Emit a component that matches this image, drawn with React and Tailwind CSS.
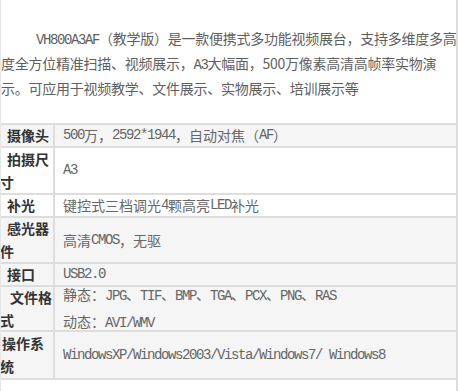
import React from "react";

const M = ({ children }) => (
  <span className="font-['Liberation_Mono',monospace] text-[14px] tracking-[-1.4px]">{children}</span>
);

const rows = [
  { label: "摄像头", ind: "indent-[7px]", h: "h-[23px]", bg: "bg-[#f5f5f5]", value: <>
    <M>500</M>万，<M>2592*1944</M>，自动对焦（<M>AF</M>）</> },
  { label: "拍摄尺寸", ind: "indent-[7px]", h: "h-[47px]", bg: "bg-white", value: <M>A3</M> },
  { label: "补光", ind: "indent-[7px]", h: "h-[23px]", bg: "bg-white", value: <>键控式三档调光<M>4</M>颗高亮<M>LED</M>补光</> },
  { label: "感光器件", ind: "indent-[7px]", h: "h-[46px]", bg: "bg-[#f5f5f5]", value: <>高清<M>CMOS</M>，无驱</> },
  { label: "接口", ind: "indent-[7px]", h: "h-[23px]", bg: "bg-[#f5f5f5]", value: <M>USB2.0</M> },
  { label: "文件格式", ind: "indent-[10px]", h: "h-[45px]", bg: "bg-[#f5f5f5]", value: <div className="leading-[25px]">
    <div>静态：<M>JPG</M>、<M>TIF</M>、<M>BMP</M>、<M>TGA</M>、<M>PCX</M>、<M>PNG</M>、<M>RAS</M></div>
    <div>动态：<M>AVI/WMV</M></div>
  </div> },
  { label: "操作系统", ind: "indent-[2px]", h: "h-[48px]", bg: "bg-[#f5f5f5]", value: <M>WindowsXP/Windows2003/Vista/Windows7/ Windows8</M> },
];

export default function App() {
  return (
    <div className="w-[458px] h-[391px] overflow-hidden bg-white border-l border-l-[#e6e6e6] border-r-2 border-r-[#dddddd] font-['Noto_Sans_CJK_SC',sans-serif]">
      <div className="pt-[27px] text-[14px] tracking-[-0.25px] leading-[23px] text-[#5f5f5f] whitespace-nowrap">
        <div className="pl-[35px]">
          <M>VH800A3AF</M>（教学版）是一款便携式多功能视频展台，支持多维度多高
        </div>
        <div>度全方位精准扫描、视频展示，<M>A3</M>大幅面，500万像素高清高帧率实物演</div>
        <div>示。可应用于视频教学、文件展示、实物展示、培训展示等</div>
      </div>
      <div className="mt-[23px] border-t-2 border-[#dddddd]">
        {rows.map((r, i) => (
          <div key={i} className={`flex border-b-2 border-[#dddddd] ${r.h} ${r.bg}`}>
            <div className="w-[54px] shrink-0 border-r-2 border-[#dddddd] flex items-center text-[14px] leading-[23px] font-bold text-[#333]">
              <div className={`-ml-px ${r.ind}`}>{r.label}</div>
            </div>
            <div className="flex-1 flex items-center pl-[8px] text-[14px] leading-[23px] text-[#666] whitespace-nowrap">
              {r.value}
            </div>
          </div>
        ))}
      </div>
    </div>
  );
}
